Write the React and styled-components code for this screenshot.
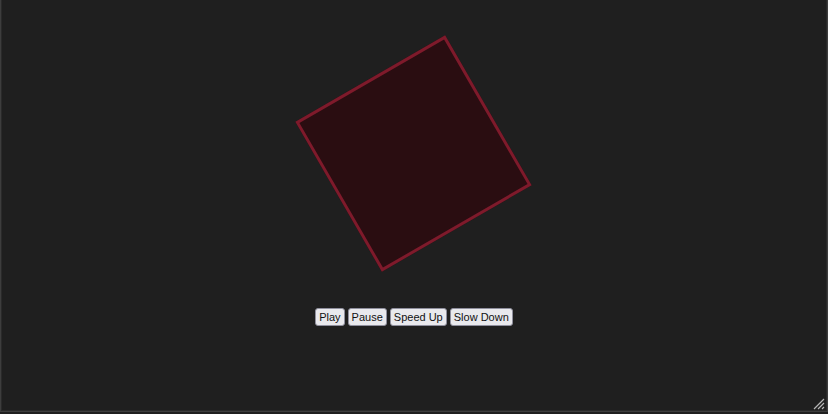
import React, { useState } from 'react';
import styled, { createGlobalStyle } from 'styled-components';

const Global = createGlobalStyle`
  html, body { margin: 0; padding: 0; background: #1f1f1f; }
  body { font-family: "Liberation Sans", Arial, sans-serif; }
`;

const Stage = styled.div`
  position: relative;
  box-sizing: border-box;
  height: 412px;
  width: 828px;
  background: #1f1f1f;
  border: 1px solid #3d3d3d;
  border-top: none;
  box-shadow: inset 1px 0 0 #2a2a2a, inset -1px 0 0 #2a2a2a, inset 0 -1px 0 #2a2a2a;
  display: flex;
  flex-direction: column;
  align-items: center;
`;

const Square = styled.div`
  box-sizing: border-box;
  width: 173px;
  height: 173px;
  margin-top: 67px;
  background: #2a0d11;
  border: 3px solid #7e1a2b;
  transform: translateX(-1px) rotate(${p => p.$angle}deg);
`;

const Controls = styled.div`
  display: flex;
  gap: 3px;
  margin-top: 68px;
`;

const Button = styled.button`
  font-family: "Liberation Sans", Arial, sans-serif;
  font-size: 11px;
  color: #111;
  background: #e9e9ed;
  border: 1px solid #8f8f9d;
  border-radius: 3px;
  padding: 1px 3px;
  height: 18px;
  line-height: 14px;
  cursor: pointer;
`;

const Grip = styled.svg`
  position: absolute;
  right: 2px;
  bottom: 1px;
`;

export default function App() {
  const [angle, setAngle] = useState(-30);
  return (
    <>
      <Global />
      <Stage>
        <Square $angle={angle} />
        <Controls>
          <Button onClick={() => setAngle(a => a + 5)}>Play</Button>
          <Button>Pause</Button>
          <Button>Speed Up</Button>
          <Button>Slow Down</Button>
        </Controls>
        <Grip width="12" height="12" viewBox="0 0 12 12">
          <path d="M11 1 L1 11 M11 5 L5 11 M11 9 L9 11" stroke="#b5b5b5" strokeWidth="1.2" />
        </Grip>
      </Stage>
    </>
  );
}
